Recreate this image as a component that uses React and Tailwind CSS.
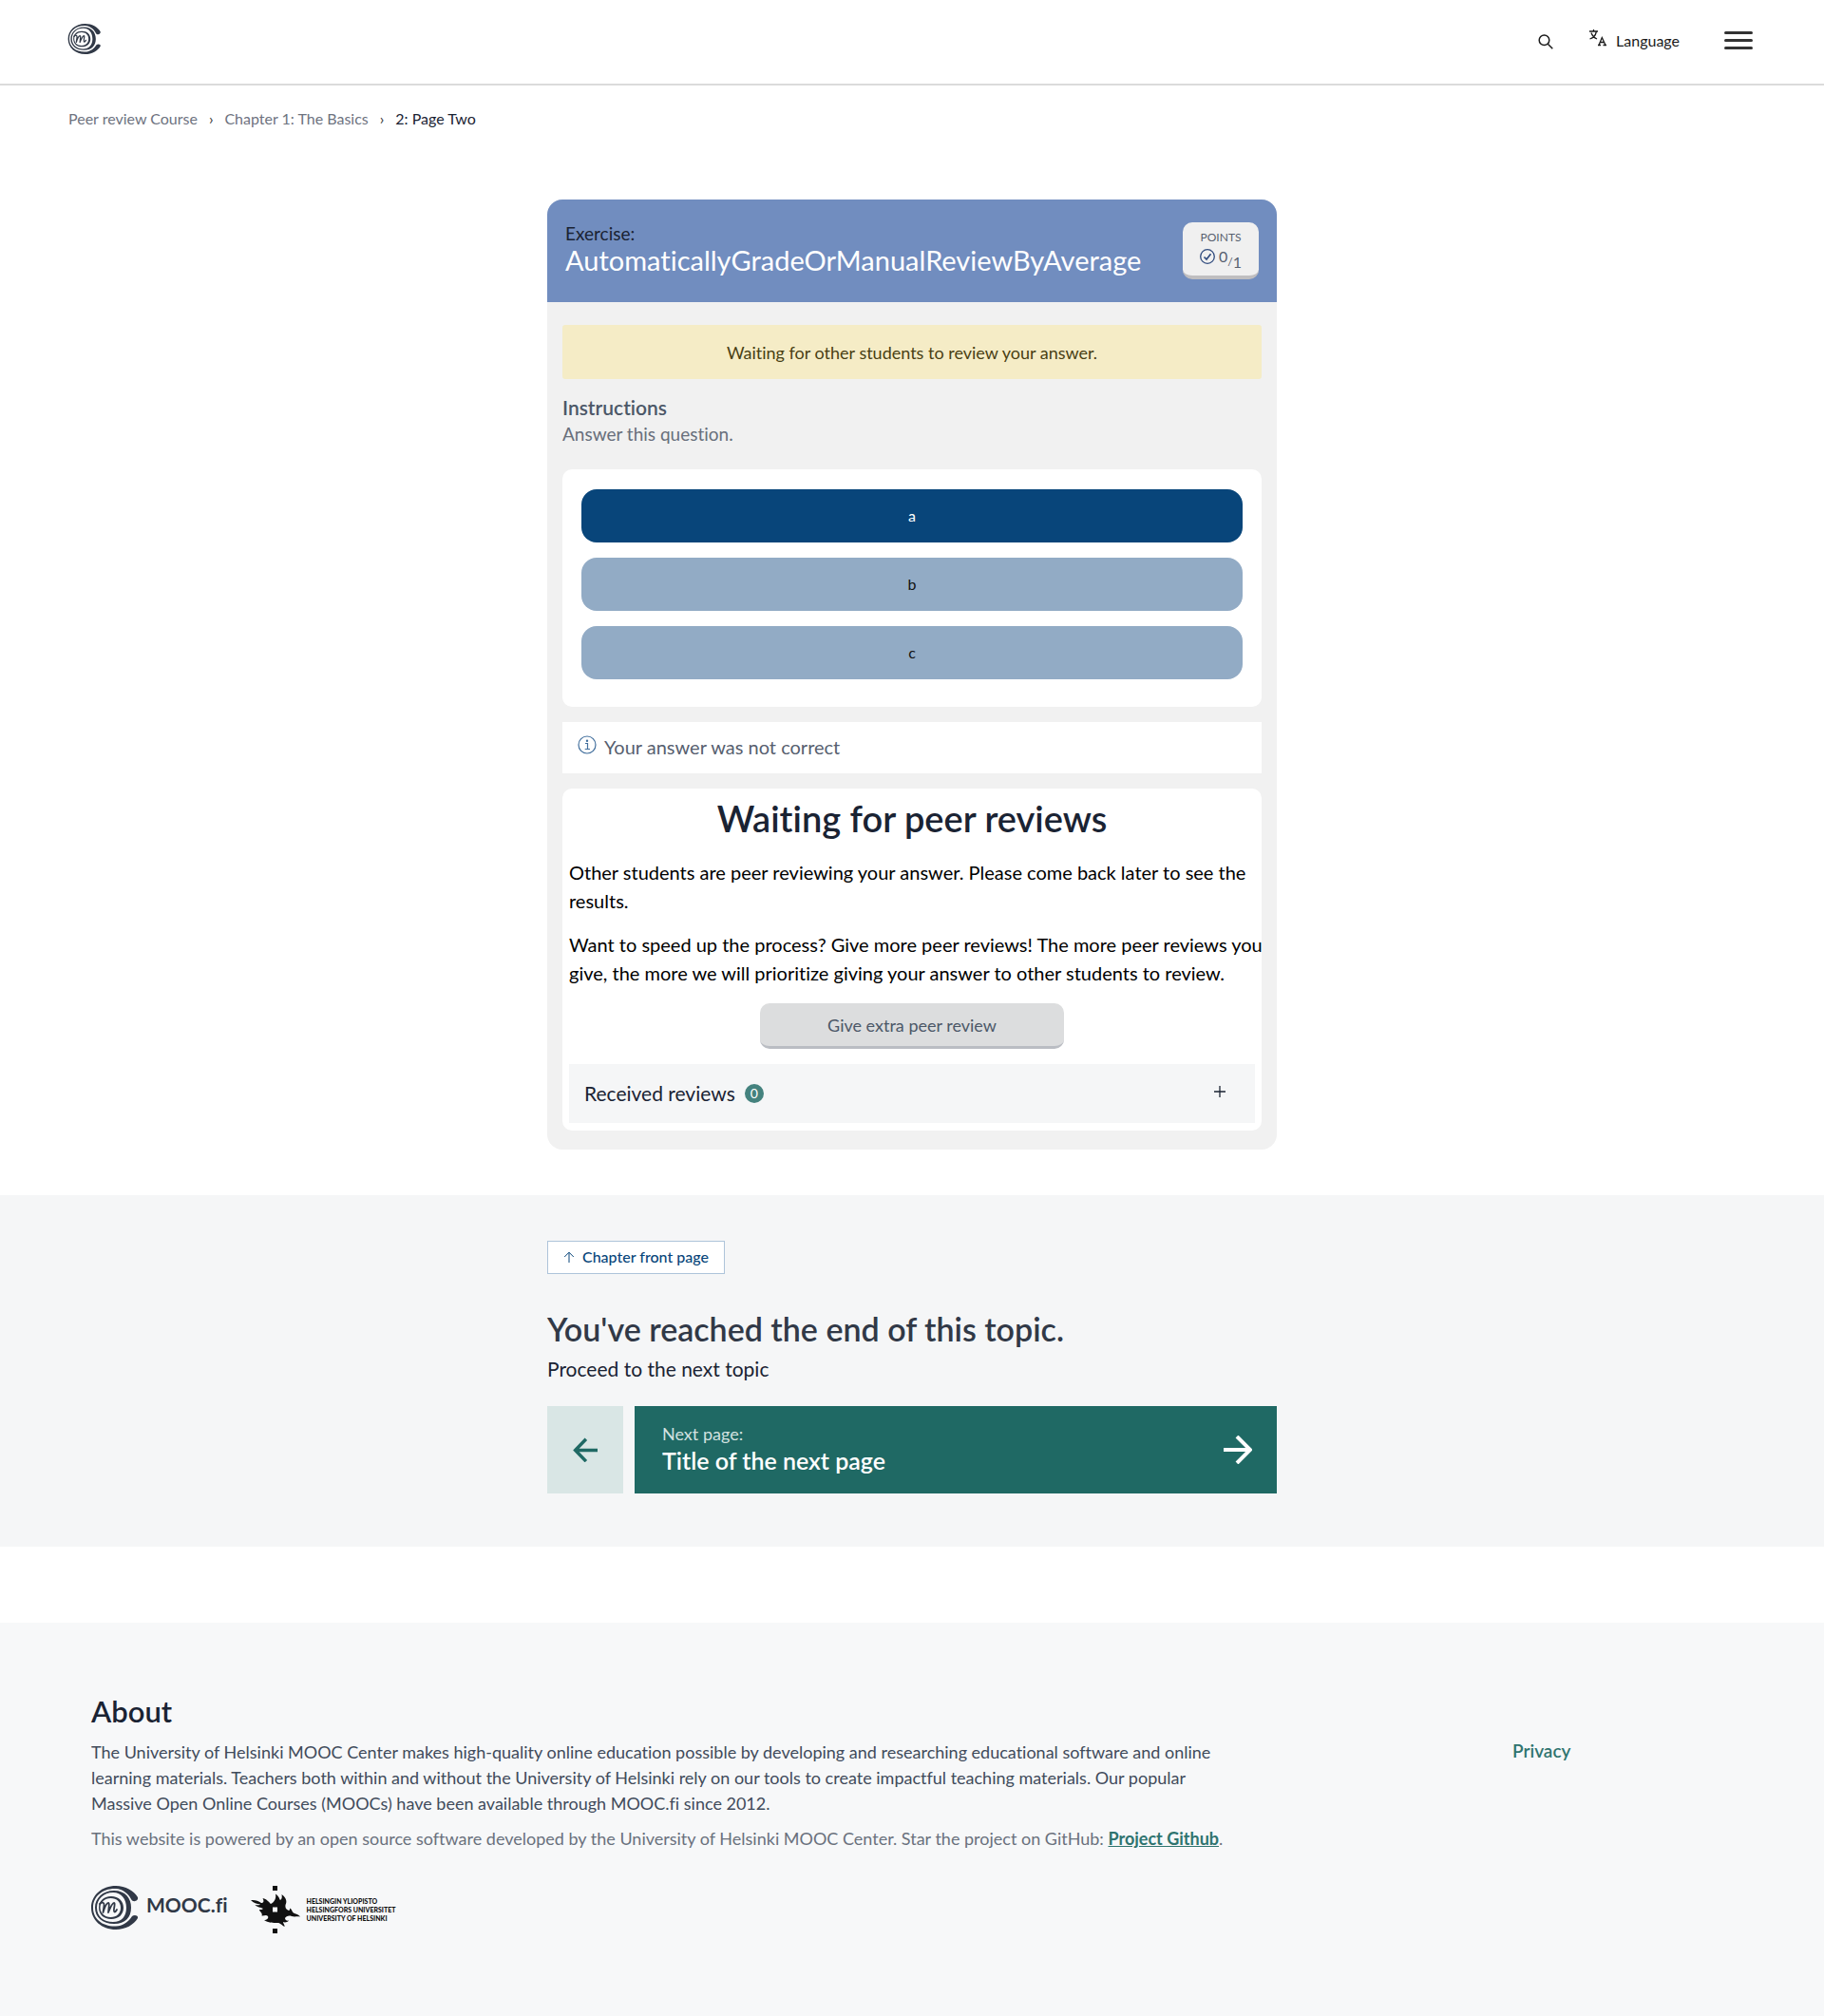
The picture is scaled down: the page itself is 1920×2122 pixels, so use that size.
import React from "react";

function MoocMark({ className }) {
  return (
    <svg viewBox="0 0 50 46" className={className} aria-hidden="true" fill="currentColor">
      <path d="M49 12 C45 5 36 0 26 0 C11 0 0 10 0 23 C0 36 11 46 26 46 C36 46 45 41 49 34 C50 31 45 30 43 32 C39 38 33 42.500 26 42.500 C12 43 2 35 2 23 C2 11 12 2.500 26 3 C33 3.500 39 8 42 14 C44 18 50 16 49 12 Z" />
      <path fillRule="evenodd" d="M24 5 C36 5 42 13 42 23 C42 33 36 40 24 40 C12 40 4 33 4 23 C4 13 12 5 24 5 Z M23 7 C13 7 6 14 6 23 C6 32 13 38 23 38 C32 38 37 32 37 23 C37 14 32 7 23 7 Z" />
      <path fillRule="evenodd" d="M21 11 C29 11 34 16 34 23 C34 30 29 35 21 35 C13 35 8 30 8 23 C8 16 13 11 21 11 Z M20.500 13 C14 13 9.500 17.500 9.500 23 C9.500 28.500 14 33 20.500 33 C27 33 31 29 31 23 C31 17 27 13 20.500 13 Z" />
      <path fill="none" stroke="currentColor" strokeWidth="1.800" strokeLinecap="round" strokeLinejoin="round" d="M9 19 C12 16 14 18 13.500 21 L12.500 28 C14 23 16 18 18 18 C19.500 18 18.500 23 18 28 C20 23 22 18 24 18 C26 18 22.500 27 24.500 27.500 C25.500 27.500 26.500 26 27 25" />
    </svg>
  );
}

function HelsinkiFlame({ className }) {
  return (
    <svg viewBox="0 0 52 50" className={className} aria-hidden="true" fill="#111111">
      <rect x="23" y="0" width="5" height="5" />
      <rect x="23" y="45" width="5" height="5" />
      <path fillRule="evenodd" d="M0 15 C4 14.500 8 15.500 11 18 C13 18 14.500 17 12.500 13 C17 14 19 17 21 19 C25 17 27 13 26 8.500 C30 11 30 14 31 15 C33 14 33 11 32.500 9 C38 13 38 17 36.500 20 C36 23 37 25 40 26 C41 26 41 25 41 23.500 C44 25 43 28 46 29 C49 30 51 31 52 32.500 C48 32 46 33 43 32 C40 31 37 32 36 34 C36 36 38 37 40 36.500 C38 39 35 38.500 34 38 C34 40 36 41 35.500 43 C32 41 31 39 28 39 C24 39 18 39 14 36 C17 36 19 34 18 32 C16 30 14 32 11.500 31.500 C13 29 9 27 9 25 C11 25 12 25 13 24 C10 22 7 23 4.500 20 C7 20.500 9 20.500 10 19.500 C6 19 3 18 0 15 Z M23 22.500 V27.500 H28 V22.500 Z" />
    </svg>
  );
}

function Arrow({ className, d, width = 3 }) {
  return (
    <svg viewBox="0 0 30 30" className={className} aria-hidden="true" fill="none" stroke="currentColor" strokeWidth={width}>
      <path d={d} />
    </svg>
  );
}

function Header() {
  return (
    <header className="flex h-[90px] items-start justify-between border-b-2 border-[#dbdbdb] pl-[71px] pr-[75px]">
      <a href="#home" aria-label="Home" className="mt-[25px] text-[#313947]">
        <MoocMark className="h-8 w-9" />
      </a>
      <div className="flex items-start">
        <button type="button" aria-label="Search" className="mt-9">
          <svg viewBox="0 0 16 16" className="size-4" fill="none" stroke="#1a1a1a" strokeWidth="1.500">
            <circle cx="6.500" cy="6.300" r="5.300" />
            <path d="M10.300 10.200 L15.300 15.200" />
          </svg>
        </button>
        <button type="button" className="ml-[38px] mt-[30px] flex items-start text-base leading-6 text-[#1a1a1a]">
          <svg viewBox="0 0 18 19" className="h-[19px] w-[18px]" fill="none" stroke="#1a1a1a" strokeWidth="1.300">
            <path d="M0 3 H9 M4.500 1 V3 M2 4.500 C3 7.500 5.500 10 8 11 M7.300 3.500 C6.500 7.500 4 10 .5 11" />
            <path d="M9 17.500 H12 M14.500 17.500 H18 M10 17.500 L13.300 9.500 L17 17.500 M11.300 14.500 H15.500" />
          </svg>
          <span className="ml-[10px] mt-[1px]">Language</span>
        </button>
        <button type="button" aria-label="Open menu" className="ml-[47px] mt-[33px] flex w-[30px] flex-col gap-[5px]">
          <span className="h-[3px] rounded-full bg-[#333333]" />
          <span className="h-[3px] rounded-full bg-[#333333]" />
          <span className="h-[3px] rounded-full bg-[#333333]" />
        </button>
      </div>
    </header>
  );
}

function Breadcrumbs() {
  return (
    <nav aria-label="Breadcrumbs" className="px-[72px] pt-[23px]">
      <ol className="flex gap-3 text-base leading-6 text-[#6e737f]">
        <li><a href="#course">Peer review Course</a></li>
        <li aria-hidden="true" className="text-[#333333]">›</li>
        <li><a href="#chapter">Chapter 1: The Basics</a></li>
        <li aria-hidden="true" className="text-[#333333]">›</li>
        <li className="text-[#1a2333]" aria-current="page">2: Page Two</li>
      </ol>
    </nav>
  );
}

function Exercise() {
  return (
    <main className="mx-auto mt-[73px] w-full max-w-3xl overflow-hidden rounded-2xl bg-[#f1f1f1]">
      <div className="flex items-start justify-between bg-[#718dbf] px-[19px] py-6">
        <h2 className="pb-1 text-white">
          <span className="block text-[19px] leading-6 text-[#1a2333]">Exercise:</span>
          <span className="block text-[29px] leading-8">AutomaticallyGradeOrManualReviewByAverage</span>
        </h2>
        <div className="w-20 rounded-[10px] border-b-4 border-[#bfbec0] bg-[#f0f0f0] pb-[10px] pt-2 text-center text-[#57606f]">
          <div className="text-xs leading-4">POINTS</div>
          <div className="mt-[2px] flex h-5 items-start justify-center text-base leading-5">
            <svg viewBox="0 0 16 16" className="mt-[2px] size-4" fill="none" stroke="#2f4a7d" strokeWidth="1.300">
              <circle cx="8" cy="8" r="7.300" />
              <path d="M4.500 8.500 L7 11 L11.500 5.300" strokeWidth="1.700" />
            </svg>
            <span className="ml-1">0</span>
            <span className="mt-[6px] text-xs leading-5">/</span>
            <span className="mt-[6px]">1</span>
          </div>
        </div>
      </div>
      <div className="px-4 pb-5 pt-6">
        <p className="flex min-h-[57px] items-center justify-center rounded-[3px] bg-[#f5ecc6] text-lg leading-6 text-[#493f13]">Waiting for other students to review your answer.</p>
        <h3 className="mt-[18px] text-[21px] font-semibold leading-6 text-[#4c5868]">Instructions</h3>
        <p className="mt-1 text-[19px] leading-6 text-[#686f7b]">Answer this question.</p>
        <div className="mt-[25px] flex flex-col gap-4 rounded-[10px] bg-white px-5 pb-[29px] pt-[21px] text-base">
          <button type="button" className="h-14 rounded-2xl bg-[#08457a] text-white">a</button>
          <button type="button" className="h-14 rounded-2xl bg-[#92abc5] text-[#111111]">b</button>
          <button type="button" className="h-14 rounded-2xl bg-[#92abc5] text-[#111111]">c</button>
        </div>
        <div className="mt-4 flex items-center bg-white px-4 pb-[14px] pt-3 text-xl leading-7 text-[#57606f]">
          <svg viewBox="0 0 20 20" className="mb-1 size-5" fill="none" stroke="#426f9d" strokeWidth="1.200">
            <circle cx="10" cy="10" r="9" />
            <path d="M8 8.500 H10.500 V14.500 M7.700 14.500 H13" />
            <circle cx="10" cy="5.700" r=".6" fill="#426f9d" />
          </svg>
          <p className="ml-2">Your answer was not correct</p>
        </div>
        <section className="mt-4 rounded-[10px] bg-white px-[7px] py-2">
          <h2 className="text-center text-[38px] font-semibold leading-[46px] text-[#1a2333]">Waiting for peer reviews</h2>
          <p className="mt-[19px] text-xl leading-[30px] text-black">Other students are peer reviewing your answer. Please come back later to see the results.</p>
          <p className="mt-4 text-xl leading-[30px] text-black md:whitespace-nowrap">Want to speed up the process? Give more peer reviews! The more peer reviews you <br />give, the more we will prioritize giving your answer to other students to review.</p>
          <button type="button" className="mx-auto mt-[17px] block h-12 w-80 rounded-[10px] border-b-[3px] border-[#babdc3] bg-[#dcddde] text-lg text-[#4c5868]">Give extra peer review</button>
          <button type="button" className="mt-4 flex h-[62px] w-full items-center bg-[#f5f6f7] pl-4 pr-[31px] text-[21px] text-[#1a2333]">
            Received reviews
            <span className="ml-[10px] flex size-5 items-center justify-center rounded-full bg-[#44827e] text-sm leading-5 text-white">0</span>
            <svg viewBox="0 0 14 14" className="mb-1 ml-auto size-3" stroke="#1a2333" strokeWidth="1.500" aria-hidden="true"><path d="M7 0 V14 M0 7 H14" /></svg>
          </button>
        </section>
      </div>
    </main>
  );
}

function NextPage() {
  return (
    <section className="mt-12 bg-[#f5f6f7] pb-14 pt-12">
      <div className="mx-auto w-full max-w-3xl">
        <a href="#front" className="flex h-[35px] w-fit items-center border border-[#aec4da] bg-white px-4 pb-[2px] text-base font-medium leading-6 text-[#08457a]">
          <Arrow className="mr-2 size-3" d="M15 30 V3 M3 15 L15 3 L27 15" width={2.5} />
          Chapter front page
        </a>
        <h2 className="mt-[38px] text-[34px] font-semibold leading-10 text-[#313947]">You've reached the end of this topic.</h2>
        <p className="mt-2 text-[21px] leading-7 text-[#1a2333]">Proceed to the next topic</p>
        <div className="mt-[25px] flex gap-3">
          <a href="#previous" aria-label="Previous page" className="flex h-[92px] w-20 items-center justify-center bg-[#d9e6e5] text-[#1f6964]">
            <Arrow className="size-[26px]" d="M30 15.500 H3 M16 2 L3 15.500 L16 29" width={4} />
          </a>
          <a href="#next" className="flex h-[92px] flex-1 items-center justify-between bg-[#1f6964] pl-[29px] pr-[26px] text-white">
            <span className="pb-[2px]">
              <span className="block text-lg leading-6 text-[#d2e1e0]">Next page:</span>
              <span className="block text-[25px] font-semibold leading-8">Title of the next page</span>
            </span>
            <Arrow className="size-[30px]" d="M0 15 H28 M14 1 L28 15 L14 29" width={4} />
          </a>
        </div>
      </div>
    </section>
  );
}

function Footer() {
  return (
    <footer className="mt-20 bg-[#f7f8f9] px-24 pb-[87px] pt-[75px]">
      <div className="flex">
        <div className="w-full max-w-[1196px]">
          <h2 className="text-[31px] font-semibold leading-9 text-[#1a2333]">About</h2>
          <p className="mt-3 text-lg leading-[27px] text-[#414b5b]">The University of Helsinki MOOC Center makes high-quality online education possible by developing and researching educational software and online<br />learning materials. Teachers both within and without the University of Helsinki rely on our tools to create impactful teaching materials. Our popular<br />Massive Open Online Courses (MOOCs) have been available through MOOC.fi since 2012.</p>
          <p className="mt-[10px] text-lg leading-[27px] text-[#6a717d]">This website is powered by an open source software developed by the University of Helsinki MOOC Center. Star the project on GitHub: <a href="#github" className="font-bold text-[#2f746f] underline">Project Github</a>.</p>
        </div>
        <a href="#privacy" className="mt-12 self-start pl-[300px] text-[19px] font-semibold leading-6 text-[#2f746f]">Privacy</a>
      </div>
      <div className="mt-9 flex items-start">
        <a href="#mooc" className="flex items-start text-[#313947]">
          <MoocMark className="h-[46px] w-[50px]" />
          <span className="ml-2 text-[21px] font-bold leading-10">MOOC.fi</span>
        </a>
        <a href="#helsinki" className="ml-6 flex items-center">
          <HelsinkiFlame className="h-[50px] w-[52px]" />
          <span className="ml-[7px] text-[7px] font-black leading-[9px] text-[#111111]">HELSINGIN YLIOPISTO<br />HELSINGFORS UNIVERSITET<br />UNIVERSITY OF HELSINKI</span>
        </a>
      </div>
    </footer>
  );
}

export default function App() {
  return (
    <div className="min-h-screen bg-white font-['Lato',sans-serif] [font-variant-ligatures:none]">
      <Header />
      <Breadcrumbs />
      <Exercise />
      <NextPage />
      <Footer />
    </div>
  );
}
